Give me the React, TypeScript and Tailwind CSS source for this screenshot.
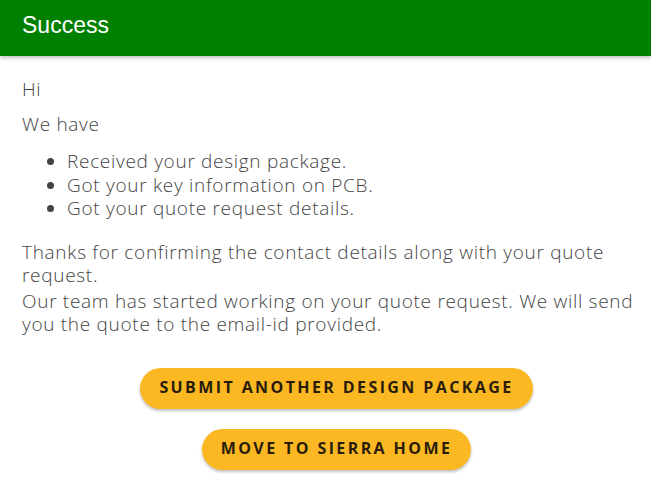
import React from "react";

const items = [
  "Received your design package.",
  "Got your key information on PCB.",
  "Got your quote request details.",
];

export default function App() {
  return (
    <div className="min-h-[500px] w-full bg-white">
      {/* header bar */}
      <div className="flex h-[56px] items-center bg-[#008000] px-[22px] pb-[5px] shadow-[0_2px_4px_rgba(0,0,0,0.25)]">
        <h1 className="font-['Liberation_Sans',Arial,sans-serif] text-[23px] text-white">
          Success
        </h1>
      </div>

      <div className="pl-[22px] pr-[10px] pt-[22px] font-['Open_Sans',sans-serif] text-[19px] font-light leading-[23.5px] tracking-[0.7px] text-[#444]">
        <p className="mb-[11px]">Hi</p>
        <p>We have</p>
        <ul className="mt-[14px] mb-[20px] list-disc pl-[45px]">
          {items.map((t) => (
            <li key={t}>{t}</li>
          ))}
        </ul>
        <p className="mb-[2px]">
          Thanks for confirming the contact details along with your quote request.
        </p>
        <p>
          Our team has started working on your quote request. We will send you the quote to
          the email-id provided.
        </p>

        <div className="mt-[31px] flex flex-col items-center gap-[20px] pl-[10px]">
          <button className="h-[41px] rounded-full bg-[#fbb822] px-[19px] font-['Open_Sans',sans-serif] text-[16px] font-bold tracking-[2.4px] text-[#2a1c0b] shadow-[0_2px_3px_rgba(0,0,0,0.25)]">
            SUBMIT ANOTHER DESIGN PACKAGE
          </button>
          <button className="h-[41px] rounded-full bg-[#fbb822] px-[19px] font-['Open_Sans',sans-serif] text-[16px] font-bold tracking-[2.4px] text-[#2a1c0b] shadow-[0_2px_3px_rgba(0,0,0,0.25)]">
            MOVE TO SIERRA HOME
          </button>
        </div>
      </div>
    </div>
  );
}
